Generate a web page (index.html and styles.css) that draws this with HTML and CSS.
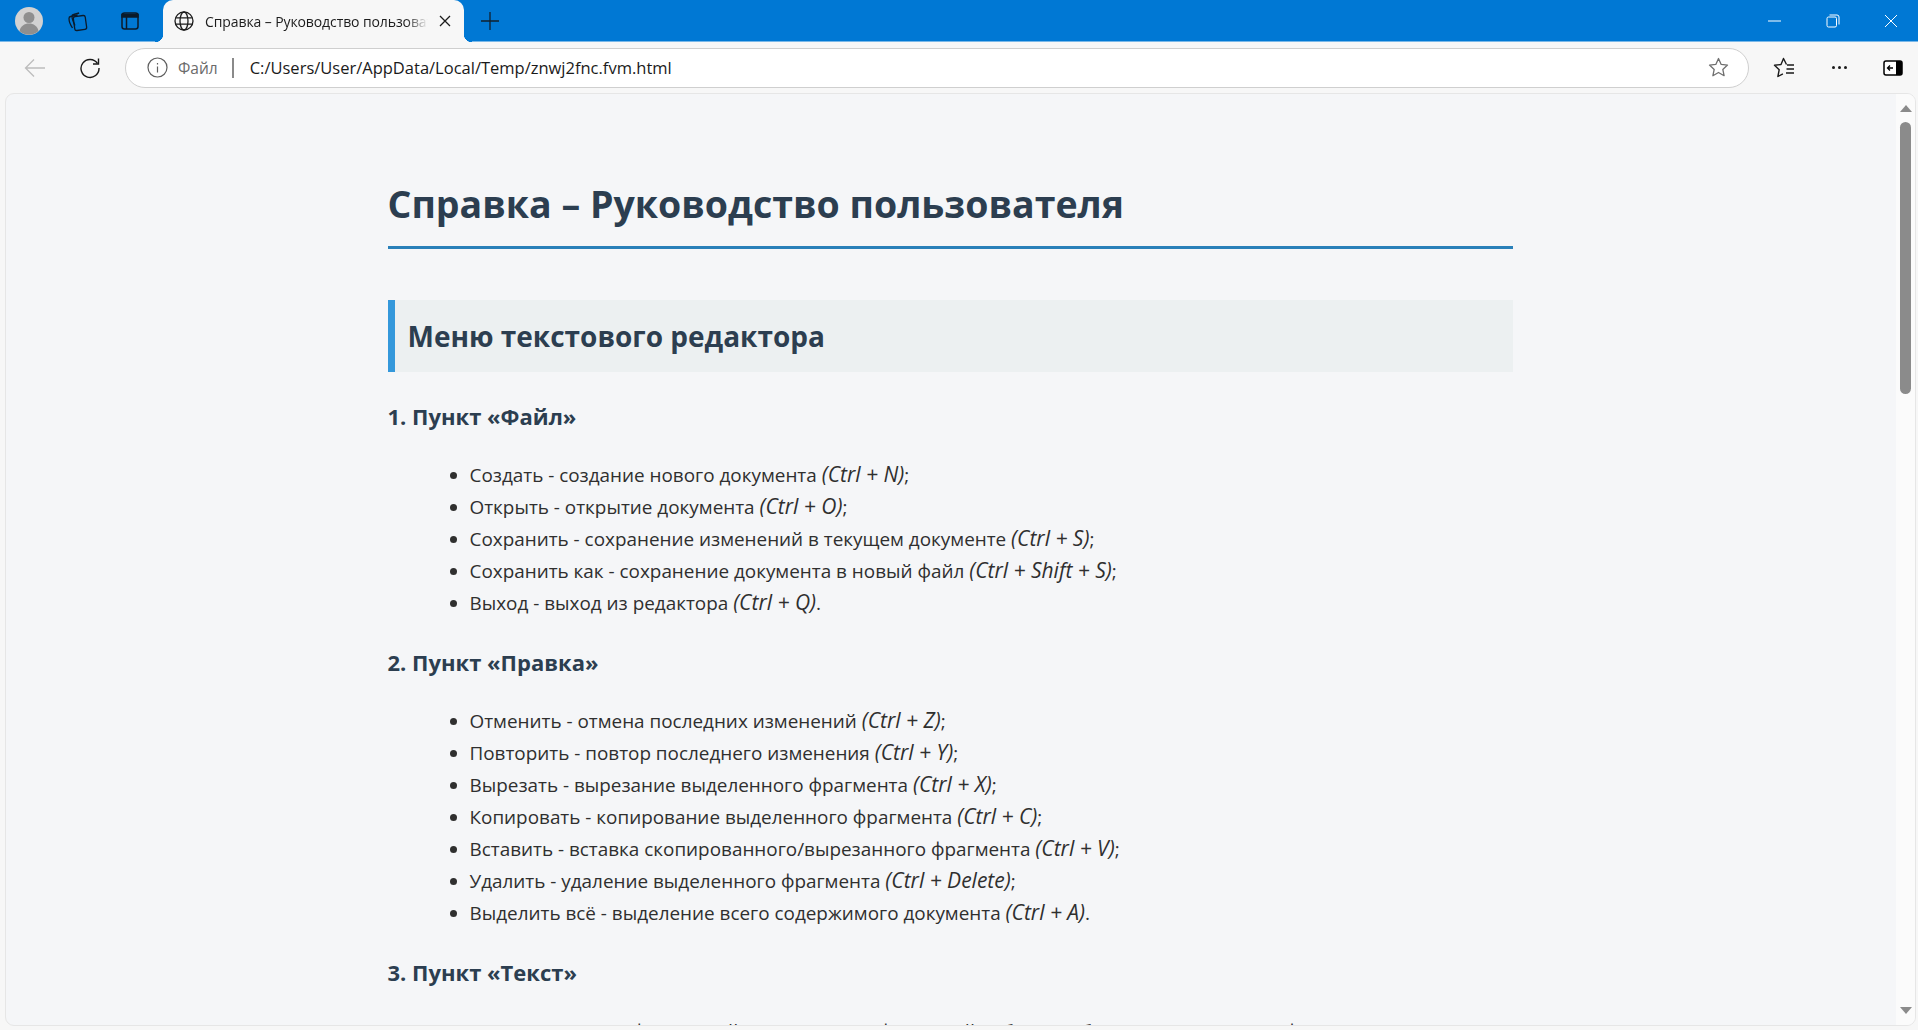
FILE: index.html
```html
<!DOCTYPE html>
<html lang="ru">
  <head>
    <meta charset="UTF-8" />
    <title>Справка – Руководство пользователя</title>
    <link rel="stylesheet" href="styles.css">
  </head>
  <body>
    <div class="titlebar">
      <div class="profile">
        <svg width="28" height="28" viewBox="0 0 28 28">
          <circle cx="14" cy="14" r="14" fill="#d2d2d2" />
          <circle cx="14" cy="10.5" r="5.5" fill="#8f8f8f" />
          <path d="M4.5 24c1-5 5-7.5 9.5-7.5s8.500 2.500 9.500 7.500a14 14 0 0 1-19 0z" fill="#8f8f8f" />
        </svg>
      </div>
      <button class="strip-btn">
        <svg width="22" height="22" viewBox="0 0 22 22" fill="none" stroke="#0b1b2b" stroke-width="1.3">
          <rect x="8" y="6" width="12" height="14" rx="2" transform="rotate(-8 14 13)" />
          <path d="M6.500 18C4.500 15 3 11 3 8.500c0-1 .6-1.800 1.600-2l7-1.500" />
          <path d="M9 15.500C7.500 12.500 6 9.500 6 6.500c0-1 .6-1.800 1.600-2l5.500-1.500" />
        </svg>
      </button>
      <button class="strip-btn">
        <svg width="22" height="22" viewBox="0 0 22 22" fill="none" stroke="#0b1b2b" stroke-width="1.500">
          <rect x="3" y="3" width="16" height="16" rx="2.500" />
          <path d="M3 4.500h16v2.500H3z" fill="#0b1b2b" />
          <path d="M7.500 7v12" />
        </svg>
      </button>
      <div class="tab">
        <svg class="tab-icon" width="20" height="20" viewBox="0 0 20 20" fill="none" stroke="#1c1c1c" stroke-width="1.300">
          <circle cx="10" cy="10" r="9" />
          <ellipse cx="10" cy="10" rx="4" ry="9" />
          <path d="M1.800 6.800h16.400M1.800 13.200h16.400" />
        </svg>
        <span class="tab-title">Справка – Руководство пользователя</span>
        <svg width="12" height="12" viewBox="0 0 12 12" stroke="#1c1c1c" stroke-width="1.300">
          <path d="M1 1l10 10M11 1L1 11" />
        </svg>
      </div>
      <button class="new-tab">
        <svg width="18" height="18" viewBox="0 0 18 18" stroke="#10202e" stroke-width="1.300">
          <path d="M9 0v18M0 9h18" />
        </svg>
      </button>
      <div class="window-btns">
        <button class="win-btn">
          <svg width="14" height="14" viewBox="0 0 14 14" stroke="#fff" stroke-width="1"><path d="M0 7h13" /></svg>
        </button>
        <button class="win-btn">
          <svg width="14" height="14" viewBox="0 0 14 14" fill="none" stroke="#fff" stroke-width="1">
            <rect x="1" y="3" width="9.500" height="10" rx="1.500" />
            <path d="M3.500 1h7.500a2 2 0 0 1 2 2v7.500" />
          </svg>
        </button>
        <button class="win-btn">
          <svg width="14" height="14" viewBox="0 0 14 14" stroke="#fff" stroke-width="1"><path d="M1 1l12 12M13 1L1 13" /></svg>
        </button>
      </div>
    </div>

    <div class="toolbar">
      <button class="tool-btn back">
        <svg width="22" height="20" viewBox="0 0 22 20" fill="none" stroke="#bdbdbd" stroke-width="1.300">
          <path d="M21 10H2M10 1.500L1.500 10l8.500 8.500" />
        </svg>
      </button>
      <button class="tool-btn reload">
        <svg width="22" height="22" viewBox="0 0 22 22" fill="none" stroke="#1a1a1a" stroke-width="1.400">
          <path d="M18.500 6.500A9 9 0 1 0 20 11" />
          <path d="M19.500 1.500v5.500h-5.500" />
        </svg>
      </button>
      <div class="address">
        <svg class="info" width="21" height="21" viewBox="0 0 21 21" fill="none" stroke="#5f5f5f" stroke-width="1.200">
          <circle cx="10.500" cy="10.500" r="9.500" />
          <path d="M10.500 9.500v6M10.500 6v1.500" />
        </svg>
        <span class="scheme">Файл</span>
        <span class="sep"></span>
        <span class="url">C:/Users/User/AppData/Local/Temp/znwj2fnc.fvm.html</span>
        <svg class="star" width="21" height="21" viewBox="0 0 21 21" fill="none" stroke="#6f6f6f" stroke-width="1.300" stroke-linejoin="round">
          <path d="M10.500 1.500l2.700 5.900 6.300.7-4.700 4.300 1.300 6.300-5.600-3.200-5.600 3.200 1.300-6.300L1.500 8.100l6.300-.7z" />
        </svg>
      </div>
      <button class="tool-btn favs">
        <svg width="22" height="22" viewBox="0 0 22 22" fill="none" stroke="#1a1a1a" stroke-width="1.400" stroke-linejoin="round">
          <path d="M13.500 7.500L10.500 1.500 8 7.500 1.500 8.300l4.700 4.400-1.300 6.800 5-2.700" />
          <path d="M14 8h7M13.500 12h7.500M13 16h8" />
        </svg>
      </button>
      <button class="tool-btn more">
        <span class="dot"></span><span class="dot"></span><span class="dot"></span>
      </button>
      <button class="tool-btn panel">
        <svg width="20" height="16" viewBox="0 0 20 16">
          <rect x="1" y="1" width="18" height="14" rx="2" fill="#fff" stroke="#000" stroke-width="1.500" />
          <path d="M13 1h4a2 2 0 0 1 2 2v10a2 2 0 0 1-2 2h-4z" fill="#000" />
          <path d="M10 8H4.500M7 5.500L4.500 8 7 10.500" fill="none" stroke="#000" stroke-width="1.300" />
        </svg>
      </button>
    </div>

    <div class="page">
      <div class="viewport">
        <div class="doc">
          <h1>Справка – Руководство пользователя</h1>
          <h2>Меню текстового редактора</h2>

          <h3>1. Пункт «Файл»</h3>
          <ul>
            <li>Создать - создание нового документа <em>(Ctrl + N)</em>;</li>
            <li>Открыть - открытие документа <em>(Ctrl + O)</em>;</li>
            <li>Сохранить - сохранение изменений в текущем документе <em>(Ctrl + S)</em>;</li>
            <li>Сохранить как - сохранение документа в новый файл <em>(Ctrl + Shift + S)</em>;</li>
            <li>Выход - выход из редактора <em>(Ctrl + Q)</em>.</li>
          </ul>

          <h3>2. Пункт «Правка»</h3>
          <ul>
            <li>Отменить - отмена последних изменений <em>(Ctrl + Z)</em>;</li>
            <li>Повторить - повтор последнего изменения <em>(Ctrl + Y)</em>;</li>
            <li>Вырезать - вырезание выделенного фрагмента <em>(Ctrl + X)</em>;</li>
            <li>Копировать - копирование выделенного фрагмента <em>(Ctrl + C)</em>;</li>
            <li>Вставить - вставка скопированного/вырезанного фрагмента <em>(Ctrl + V)</em>;</li>
            <li>Удалить - удаление выделенного фрагмента <em>(Ctrl + Delete)</em>;</li>
            <li>Выделить всё - выделение всего содержимого документа <em>(Ctrl + A)</em>.</li>
          </ul>

          <h3>3. Пункт «Текст»</h3>
          <p>Содержит параметры шрифта единой строки текста, фона ячейки блока. Обратите внимание на формат текста в C/C++.</p>
        </div>
      </div>
      <div class="scrollbar">
        <span class="arrow-up"></span>
        <span class="thumb"></span>
        <span class="arrow-down"></span>
      </div>
    </div>
  </body>
</html>
```

FILE: styles.css
```css
* {
  box-sizing: border-box;
}

html,
body {
  height: 100%;
}

body {
  margin: 0;
  overflow: hidden;
  display: flex;
  flex-direction: column;
  background: #f7f7f7;
  font-family: "Open Sans", "Noto Sans", sans-serif;
}

button {
  border: none;
  background: none;
  padding: 0;
  display: flex;
  align-items: center;
  justify-content: center;
}

.titlebar {
  height: 42px;
  flex: none;
  display: flex;
  align-items: center;
  background: #0078d4;
  border-bottom: 1px solid #7ab8e8;
}

.profile {
  width: 56px;
  display: flex;
  justify-content: center;
  padding-left: 1px;
}

.strip-btn {
  width: 53px;
  height: 42px;
}

.strip-btn:first-of-type {
  margin-left: -6px;
}

.tab {
  align-self: flex-end;
  width: 301px;
  height: 42px;
  margin-bottom: -1px;
  margin-left: 7px;
  padding: 0 13px 0 11px;
  display: flex;
  align-items: center;
  gap: 11px;
  background: #f7f7f7;
  border-radius: 10px 10px 0 0;
  position: relative;
}

.tab::before,
.tab::after {
  content: "";
  position: absolute;
  bottom: 0;
  width: 8px;
  height: 8px;
  background: radial-gradient(circle at 0 0, #0078d4 8px, #f7f7f7 8.500px);
}

.tab::before {
  left: -8px;
}

.tab::after {
  right: -8px;
  background: radial-gradient(circle at 100% 0, #0078d4 8px, #f7f7f7 8.500px);
}

.tab-icon {
  flex: none;
}

.tab-title {
  flex: 1;
  overflow: hidden;
  white-space: nowrap;
  font-size: 14px;
  color: #1c1c1c;
  letter-spacing: -0.1px;
  -webkit-mask-image: linear-gradient(to right, #000 90%, transparent);
  mask-image: linear-gradient(to right, #000 90%, transparent);
}

.new-tab {
  width: 26px;
  height: 42px;
  margin-left: 13px;
}

.window-btns {
  margin-left: auto;
  display: flex;
  align-items: center;
  gap: 44px;
  padding-right: 20px;
}

.win-btn {
  width: 14px;
  height: 14px;
}

.toolbar {
  height: 51px;
  flex: none;
  display: flex;
  align-items: center;
  background: #f7f7f7;
}

.tool-btn {
  height: 40px;
}

.back {
  width: 70px;
}

.reload {
  width: 40px;
}

.address {
  flex: 1;
  height: 40px;
  margin-left: 15px;
  padding: 0 19px 0 21px;
  display: flex;
  align-items: center;
  background: #fff;
  border: 1px solid #cfcfcf;
  border-radius: 20px;
}

.info {
  flex: none;
}

.scheme {
  margin-left: 10px;
  font-size: 15.500px;
  color: #6b6b6b;
}

.sep {
  width: 2px;
  height: 20px;
  margin: 0 16px 0 14px;
  background: #8a8a8a;
}

.url {
  flex: 1;
  font-size: 16.500px;
  color: #1a1a1a;
}

.favs {
  width: 36px;
  margin-left: 17px;
}

.more {
  width: 36px;
  margin-left: 19px;
  gap: 3px;
}

.dot {
  width: 3px;
  height: 3px;
  border-radius: 50%;
  background: #1a1a1a;
}

.panel {
  width: 36px;
  margin: 0 7px 0 18px;
}

.page {
  flex: 1;
  min-height: 0;
  margin: 0 2px 4px 5px;
  display: flex;
  overflow: hidden;
  background: #f5f6f8;
  border: 1px solid #e6e6e6;
  border-radius: 9px;
}

.viewport {
  flex: 1;
  min-width: 0;
  overflow: hidden;
  padding-right: 2px;
}

.doc {
  max-width: 1125px;
  margin: 0 auto;
  padding-top: 84px;
  font-size: 18.900px;
  line-height: 32px;
  color: #2f2f2f;
}

em {
  font-size: 21px;
  line-height: 1;
}

h1 {
  margin: 0 0 51px;
  padding-bottom: 16px;
  font-size: 37.500px;
  line-height: 52px;
  font-weight: 700;
  color: #2c3e50;
  border-bottom: 3px solid #2980b9;
}

h2 {
  margin: 0 0 24px;
  padding: 15.500px 13px;
  font-size: 28px;
  line-height: 41px;
  font-weight: 700;
  color: #2c3e50;
  background: #ecf0f1;
  border-left: 7px solid #3498db;
}

h3 {
  margin: 0 0 23px;
  font-size: 22px;
  line-height: 40px;
  font-weight: 700;
  color: #2c3e50;
}

ul {
  margin: 0 0 23px;
  padding-left: 82px;
}

p {
  margin: 4px 0 0;
  white-space: nowrap;
}

.scrollbar {
  flex: none;
  width: 19px;
  display: flex;
  flex-direction: column;
  align-items: center;
  padding: 11px 0 11px;
  background: #fbfbfb;
}

.arrow-up,
.arrow-down {
  flex: none;
  width: 0;
  height: 0;
  border-left: 6.500px solid transparent;
  border-right: 6.500px solid transparent;
}

.arrow-up {
  border-bottom: 7px solid #8b8b8b;
}

.arrow-down {
  margin-top: auto;
  border-top: 7px solid #8b8b8b;
}

.thumb {
  width: 11px;
  height: 272px;
  margin-top: 10px;
  background: #8b8b8b;
  border-radius: 6px;
}
```
